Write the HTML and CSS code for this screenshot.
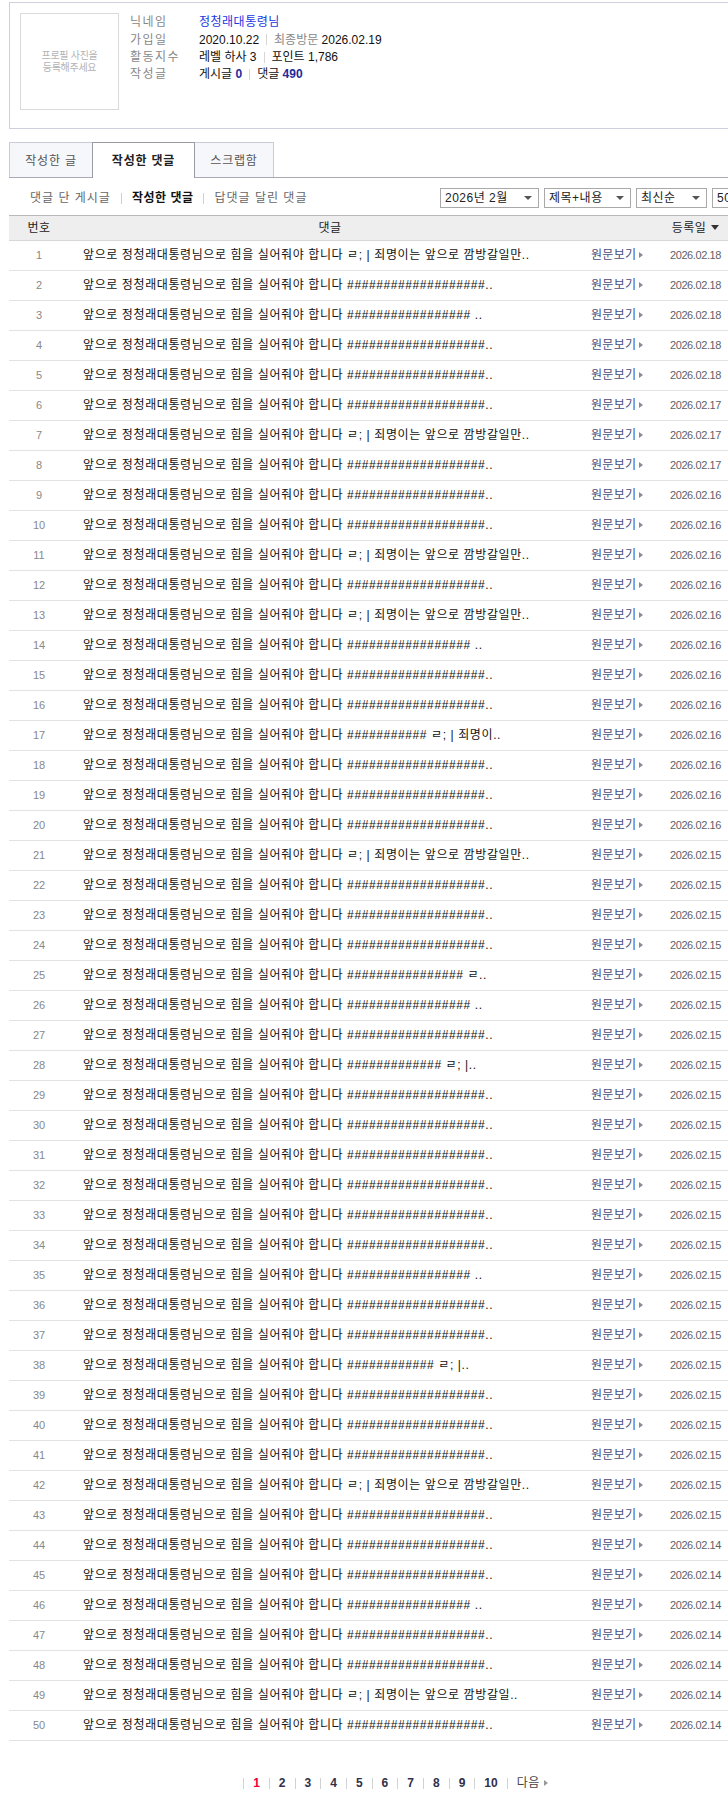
FILE: index.html
```html
<!DOCTYPE html>
<html lang="ko">
<head>
<meta charset="utf-8">
<title>작성한 댓글</title>
<link rel="stylesheet" href="styles.css">
</head>
<body>
<div class="page">
  <div class="profile">
    <div class="photo"><span>프로필 사진을</span><span>등록해주세요</span></div>
    <div class="info">
      <div class="info-row"><span class="label">닉네임</span><span class="nick">정청래대통령님</span></div>
      <div class="info-row"><span class="label">가입일</span><span>2020.10.22</span><span class="bar"></span><span class="muted">최종방문</span>&nbsp;2026.02.19</div>
      <div class="info-row"><span class="label">활동지수</span><span>레벨 하사 3</span><span class="bar"></span><span>포인트 1,786</span></div>
      <div class="info-row"><span class="label">작성글</span><span>게시글 <b class="count">0</b></span><span class="bar"></span><span>댓글 <b class="count">490</b></span></div>
    </div>
  </div>

  <div class="tabs">
    <div class="tab tab-first">작성한 글</div>
    <div class="tab tab-active">작성한 댓글</div>
    <div class="tab tab-last">스크랩함</div>
  </div>

  <div class="filter">
    <span class="sub">댓글 단 게시글</span><span class="bar"></span><span class="sub sub-on">작성한 댓글</span><span class="bar"></span><span class="sub">답댓글 달린 댓글</span>
    <div class="selects">
      <div class="select s-month">2026년 2월<i class="caret"></i></div>
      <div class="select s-type">제목+내용<i class="caret"></i></div>
      <div class="select s-sort">최신순<i class="caret"></i></div>
      <div class="select s-count">50개씩<i class="caret"></i></div>
    </div>
  </div>

  <div class="list">
    <div class="thead"><span class="c-no">번호</span><span class="c-head">댓글</span><span></span><span class="c-date">등록일<i class="down"></i></span></div>
    <div class="row"><span class="c-no">1</span><span class="c-text">앞으로 정청래대통령님으로 힘을 실어줘야 합니다 ㄹ; | 죄명이는 앞으로 깜방갈일만..</span><span class="c-link">원문보기</span><span class="c-date">2026.02.18</span></div>
    <div class="row"><span class="c-no">2</span><span class="c-text">앞으로 정청래대통령님으로 힘을 실어줘야 합니다 ###################..</span><span class="c-link">원문보기</span><span class="c-date">2026.02.18</span></div>
    <div class="row"><span class="c-no">3</span><span class="c-text">앞으로 정청래대통령님으로 힘을 실어줘야 합니다 ################# ..</span><span class="c-link">원문보기</span><span class="c-date">2026.02.18</span></div>
    <div class="row"><span class="c-no">4</span><span class="c-text">앞으로 정청래대통령님으로 힘을 실어줘야 합니다 ###################..</span><span class="c-link">원문보기</span><span class="c-date">2026.02.18</span></div>
    <div class="row"><span class="c-no">5</span><span class="c-text">앞으로 정청래대통령님으로 힘을 실어줘야 합니다 ###################..</span><span class="c-link">원문보기</span><span class="c-date">2026.02.18</span></div>
    <div class="row"><span class="c-no">6</span><span class="c-text">앞으로 정청래대통령님으로 힘을 실어줘야 합니다 ###################..</span><span class="c-link">원문보기</span><span class="c-date">2026.02.17</span></div>
    <div class="row"><span class="c-no">7</span><span class="c-text">앞으로 정청래대통령님으로 힘을 실어줘야 합니다 ㄹ; | 죄명이는 앞으로 깜방갈일만..</span><span class="c-link">원문보기</span><span class="c-date">2026.02.17</span></div>
    <div class="row"><span class="c-no">8</span><span class="c-text">앞으로 정청래대통령님으로 힘을 실어줘야 합니다 ###################..</span><span class="c-link">원문보기</span><span class="c-date">2026.02.17</span></div>
    <div class="row"><span class="c-no">9</span><span class="c-text">앞으로 정청래대통령님으로 힘을 실어줘야 합니다 ###################..</span><span class="c-link">원문보기</span><span class="c-date">2026.02.16</span></div>
    <div class="row"><span class="c-no">10</span><span class="c-text">앞으로 정청래대통령님으로 힘을 실어줘야 합니다 ###################..</span><span class="c-link">원문보기</span><span class="c-date">2026.02.16</span></div>
    <div class="row"><span class="c-no">11</span><span class="c-text">앞으로 정청래대통령님으로 힘을 실어줘야 합니다 ㄹ; | 죄명이는 앞으로 깜방갈일만..</span><span class="c-link">원문보기</span><span class="c-date">2026.02.16</span></div>
    <div class="row"><span class="c-no">12</span><span class="c-text">앞으로 정청래대통령님으로 힘을 실어줘야 합니다 ###################..</span><span class="c-link">원문보기</span><span class="c-date">2026.02.16</span></div>
    <div class="row"><span class="c-no">13</span><span class="c-text">앞으로 정청래대통령님으로 힘을 실어줘야 합니다 ㄹ; | 죄명이는 앞으로 깜방갈일만..</span><span class="c-link">원문보기</span><span class="c-date">2026.02.16</span></div>
    <div class="row"><span class="c-no">14</span><span class="c-text">앞으로 정청래대통령님으로 힘을 실어줘야 합니다 ################# ..</span><span class="c-link">원문보기</span><span class="c-date">2026.02.16</span></div>
    <div class="row"><span class="c-no">15</span><span class="c-text">앞으로 정청래대통령님으로 힘을 실어줘야 합니다 ###################..</span><span class="c-link">원문보기</span><span class="c-date">2026.02.16</span></div>
    <div class="row"><span class="c-no">16</span><span class="c-text">앞으로 정청래대통령님으로 힘을 실어줘야 합니다 ###################..</span><span class="c-link">원문보기</span><span class="c-date">2026.02.16</span></div>
    <div class="row"><span class="c-no">17</span><span class="c-text">앞으로 정청래대통령님으로 힘을 실어줘야 합니다 ########### ㄹ; | 죄명이..</span><span class="c-link">원문보기</span><span class="c-date">2026.02.16</span></div>
    <div class="row"><span class="c-no">18</span><span class="c-text">앞으로 정청래대통령님으로 힘을 실어줘야 합니다 ###################..</span><span class="c-link">원문보기</span><span class="c-date">2026.02.16</span></div>
    <div class="row"><span class="c-no">19</span><span class="c-text">앞으로 정청래대통령님으로 힘을 실어줘야 합니다 ###################..</span><span class="c-link">원문보기</span><span class="c-date">2026.02.16</span></div>
    <div class="row"><span class="c-no">20</span><span class="c-text">앞으로 정청래대통령님으로 힘을 실어줘야 합니다 ###################..</span><span class="c-link">원문보기</span><span class="c-date">2026.02.16</span></div>
    <div class="row"><span class="c-no">21</span><span class="c-text">앞으로 정청래대통령님으로 힘을 실어줘야 합니다 ㄹ; | 죄명이는 앞으로 깜방갈일만..</span><span class="c-link">원문보기</span><span class="c-date">2026.02.15</span></div>
    <div class="row"><span class="c-no">22</span><span class="c-text">앞으로 정청래대통령님으로 힘을 실어줘야 합니다 ###################..</span><span class="c-link">원문보기</span><span class="c-date">2026.02.15</span></div>
    <div class="row"><span class="c-no">23</span><span class="c-text">앞으로 정청래대통령님으로 힘을 실어줘야 합니다 ###################..</span><span class="c-link">원문보기</span><span class="c-date">2026.02.15</span></div>
    <div class="row"><span class="c-no">24</span><span class="c-text">앞으로 정청래대통령님으로 힘을 실어줘야 합니다 ###################..</span><span class="c-link">원문보기</span><span class="c-date">2026.02.15</span></div>
    <div class="row"><span class="c-no">25</span><span class="c-text">앞으로 정청래대통령님으로 힘을 실어줘야 합니다 ################ ㄹ..</span><span class="c-link">원문보기</span><span class="c-date">2026.02.15</span></div>
    <div class="row"><span class="c-no">26</span><span class="c-text">앞으로 정청래대통령님으로 힘을 실어줘야 합니다 ################# ..</span><span class="c-link">원문보기</span><span class="c-date">2026.02.15</span></div>
    <div class="row"><span class="c-no">27</span><span class="c-text">앞으로 정청래대통령님으로 힘을 실어줘야 합니다 ###################..</span><span class="c-link">원문보기</span><span class="c-date">2026.02.15</span></div>
    <div class="row"><span class="c-no">28</span><span class="c-text">앞으로 정청래대통령님으로 힘을 실어줘야 합니다 ############# ㄹ; |..</span><span class="c-link">원문보기</span><span class="c-date">2026.02.15</span></div>
    <div class="row"><span class="c-no">29</span><span class="c-text">앞으로 정청래대통령님으로 힘을 실어줘야 합니다 ###################..</span><span class="c-link">원문보기</span><span class="c-date">2026.02.15</span></div>
    <div class="row"><span class="c-no">30</span><span class="c-text">앞으로 정청래대통령님으로 힘을 실어줘야 합니다 ###################..</span><span class="c-link">원문보기</span><span class="c-date">2026.02.15</span></div>
    <div class="row"><span class="c-no">31</span><span class="c-text">앞으로 정청래대통령님으로 힘을 실어줘야 합니다 ###################..</span><span class="c-link">원문보기</span><span class="c-date">2026.02.15</span></div>
    <div class="row"><span class="c-no">32</span><span class="c-text">앞으로 정청래대통령님으로 힘을 실어줘야 합니다 ###################..</span><span class="c-link">원문보기</span><span class="c-date">2026.02.15</span></div>
    <div class="row"><span class="c-no">33</span><span class="c-text">앞으로 정청래대통령님으로 힘을 실어줘야 합니다 ###################..</span><span class="c-link">원문보기</span><span class="c-date">2026.02.15</span></div>
    <div class="row"><span class="c-no">34</span><span class="c-text">앞으로 정청래대통령님으로 힘을 실어줘야 합니다 ###################..</span><span class="c-link">원문보기</span><span class="c-date">2026.02.15</span></div>
    <div class="row"><span class="c-no">35</span><span class="c-text">앞으로 정청래대통령님으로 힘을 실어줘야 합니다 ################# ..</span><span class="c-link">원문보기</span><span class="c-date">2026.02.15</span></div>
    <div class="row"><span class="c-no">36</span><span class="c-text">앞으로 정청래대통령님으로 힘을 실어줘야 합니다 ###################..</span><span class="c-link">원문보기</span><span class="c-date">2026.02.15</span></div>
    <div class="row"><span class="c-no">37</span><span class="c-text">앞으로 정청래대통령님으로 힘을 실어줘야 합니다 ###################..</span><span class="c-link">원문보기</span><span class="c-date">2026.02.15</span></div>
    <div class="row"><span class="c-no">38</span><span class="c-text">앞으로 정청래대통령님으로 힘을 실어줘야 합니다 ############ ㄹ; |..</span><span class="c-link">원문보기</span><span class="c-date">2026.02.15</span></div>
    <div class="row"><span class="c-no">39</span><span class="c-text">앞으로 정청래대통령님으로 힘을 실어줘야 합니다 ###################..</span><span class="c-link">원문보기</span><span class="c-date">2026.02.15</span></div>
    <div class="row"><span class="c-no">40</span><span class="c-text">앞으로 정청래대통령님으로 힘을 실어줘야 합니다 ###################..</span><span class="c-link">원문보기</span><span class="c-date">2026.02.15</span></div>
    <div class="row"><span class="c-no">41</span><span class="c-text">앞으로 정청래대통령님으로 힘을 실어줘야 합니다 ###################..</span><span class="c-link">원문보기</span><span class="c-date">2026.02.15</span></div>
    <div class="row"><span class="c-no">42</span><span class="c-text">앞으로 정청래대통령님으로 힘을 실어줘야 합니다 ㄹ; | 죄명이는 앞으로 깜방갈일만..</span><span class="c-link">원문보기</span><span class="c-date">2026.02.15</span></div>
    <div class="row"><span class="c-no">43</span><span class="c-text">앞으로 정청래대통령님으로 힘을 실어줘야 합니다 ###################..</span><span class="c-link">원문보기</span><span class="c-date">2026.02.15</span></div>
    <div class="row"><span class="c-no">44</span><span class="c-text">앞으로 정청래대통령님으로 힘을 실어줘야 합니다 ###################..</span><span class="c-link">원문보기</span><span class="c-date">2026.02.14</span></div>
    <div class="row"><span class="c-no">45</span><span class="c-text">앞으로 정청래대통령님으로 힘을 실어줘야 합니다 ###################..</span><span class="c-link">원문보기</span><span class="c-date">2026.02.14</span></div>
    <div class="row"><span class="c-no">46</span><span class="c-text">앞으로 정청래대통령님으로 힘을 실어줘야 합니다 ################# ..</span><span class="c-link">원문보기</span><span class="c-date">2026.02.14</span></div>
    <div class="row"><span class="c-no">47</span><span class="c-text">앞으로 정청래대통령님으로 힘을 실어줘야 합니다 ###################..</span><span class="c-link">원문보기</span><span class="c-date">2026.02.14</span></div>
    <div class="row"><span class="c-no">48</span><span class="c-text">앞으로 정청래대통령님으로 힘을 실어줘야 합니다 ###################..</span><span class="c-link">원문보기</span><span class="c-date">2026.02.14</span></div>
    <div class="row"><span class="c-no">49</span><span class="c-text">앞으로 정청래대통령님으로 힘을 실어줘야 합니다 ㄹ; | 죄명이는 앞으로 깜방갈일..</span><span class="c-link">원문보기</span><span class="c-date">2026.02.14</span></div>
    <div class="row"><span class="c-no">50</span><span class="c-text">앞으로 정청래대통령님으로 힘을 실어줘야 합니다 ###################..</span><span class="c-link">원문보기</span><span class="c-date">2026.02.14</span></div>
  </div>

  <div class="paging">
    <span class="pg-sep"></span><a class="pg pg-on">1</a>
    <span class="pg-sep"></span><a class="pg">2</a>
    <span class="pg-sep"></span><a class="pg">3</a>
    <span class="pg-sep"></span><a class="pg">4</a>
    <span class="pg-sep"></span><a class="pg">5</a>
    <span class="pg-sep"></span><a class="pg">6</a>
    <span class="pg-sep"></span><a class="pg">7</a>
    <span class="pg-sep"></span><a class="pg">8</a>
    <span class="pg-sep"></span><a class="pg">9</a>
    <span class="pg-sep"></span><a class="pg">10</a>
    <span class="pg-sep"></span><a class="pg-next">다음</a>
  </div>
</div>
</body>
</html>
```

FILE: styles.css
```css
html, body {
  margin: 0;
  padding: 0;
  overflow: hidden;
  background: #fff;
}
body {
  font-family: "Liberation Sans", "Noto Sans CJK KR", sans-serif;
  font-size: 12px;
  line-height: 1.2;
  color: #222;
}
.page {
  width: 773px;
  padding: 2px 0 0 9px;
}

/* profile */
.profile {
  display: flex;
  box-sizing: border-box;
  height: 127px;
  padding: 10px 10px 0;
  border: 1px solid #cfd0dd;
}
.photo {
  box-sizing: border-box;
  width: 99px;
  height: 97px;
  border: 1px solid #dadada;
  display: flex;
  flex-direction: column;
  align-items: center;
  justify-content: center;
  font-size: 10px;
  line-height: 12px;
  color: #b3b3b3;
  letter-spacing: -0.3px;
}
.info {
  margin-left: 11px;
  padding-top: 1px;
}
.info-row {
  display: flex;
  align-items: center;
  height: 17.3px;
  color: #111;
  white-space: nowrap;
}
.label {
  width: 69px;
  color: #888;
  letter-spacing: 1.5px;
}
.nick {
  color: #1b36e0;
  letter-spacing: 0.5px;
}
.muted {
  color: #888;
}
.count {
  color: #1e2a9c;
}
.bar {
  display: inline-block;
  width: 1px;
  height: 11px;
  background: #d6d6d6;
  margin: 0 7px;
}

/* tabs */
.tabs {
  display: flex;
  align-items: flex-start;
  margin-top: 13px;
  border-bottom: 1px solid #a9a9b2;
}
.tab {
  box-sizing: border-box;
  height: 35px;
  padding-top: 3px;
  border: 1px solid #c9cbd8;
  border-bottom: 0;
  background: #f6f7fa;
  color: #555;
  display: flex;
  align-items: center;
  justify-content: center;
  font-size: 12px;
  letter-spacing: 0.8px;
}
.tab-first {
  width: 84px;
}
.tab-active {
  position: relative;
  z-index: 1;
  width: 103px;
  height: 36px;
  margin: 0 0 -1px -1px;
  padding-bottom: 1px;
  border-color: #9a9aa6;
  background: #fff;
  color: #222;
  font-weight: bold;
}
.tab-last {
  width: 80px;
  margin-left: -1px;
}

/* filter */
.filter {
  display: flex;
  align-items: center;
  height: 20px;
  margin-top: 10px;
  padding-left: 21px;
  white-space: nowrap;
}
.filter .bar {
  margin: 0 10px;
  background: #d0d0d0;
}
.sub {
  color: #666;
  letter-spacing: 1px;
}
.sub-on {
  color: #111;
  font-weight: bold;
  letter-spacing: 0.5px;
}
.selects {
  display: flex;
  gap: 5px;
  margin-left: auto;
}
.select {
  box-sizing: border-box;
  height: 20px;
  padding: 0 0 0 4px;
  border: 1px solid #a9a9a9;
  background: #fff;
  color: #222;
  display: flex;
  align-items: center;
  justify-content: space-between;
  letter-spacing: 0.5px;
}
.s-month { width: 99px; }
.s-type { width: 87px; }
.s-sort { width: 71px; }
.s-count { width: 70px; }
.caret {
  width: 0;
  height: 0;
  margin-right: 6px;
  border-left: 4px solid transparent;
  border-right: 4px solid transparent;
  border-top: 4px solid #555;
}

/* list */
.list {
  width: 727px;
  margin-top: 7px;
}
.thead,
.row {
  display: grid;
  grid-template-columns: 60px 522px 64px 81px;
  align-items: center;
  box-sizing: border-box;
  white-space: nowrap;
}
.thead {
  height: 26px;
  border-top: 1px solid #b9b9b9;
  border-bottom: 1px solid #d8d8d8;
  background: #eeeeee;
  color: #222;
}
.row {
  height: 30px;
  border-bottom: 1px solid #e3e3e3;
}
.c-no {
  text-align: center;
  font-size: 11px;
  color: #888;
}
.thead .c-no {
  font-size: 12px;
  color: #222;
  letter-spacing: 0.5px;
}
.c-head {
  text-align: center;
  letter-spacing: 0.5px;
}
.c-text {
  padding-left: 14px;
  color: #111;
  overflow: hidden;
  letter-spacing: 0.6px;
}
.c-link {
  color: #474e7c;
  display: flex;
  align-items: center;
  letter-spacing: 0.3px;
}
.c-link::after {
  content: "";
  width: 0;
  height: 0;
  margin-left: 3px;
  border-top: 3px solid transparent;
  border-bottom: 3px solid transparent;
  border-left: 4px solid #8a8a96;
}
.c-date {
  text-align: center;
  font-size: 11px;
  letter-spacing: -0.4px;
  color: #5f5f6a;
}
.thead .c-date {
  font-size: 12px;
  letter-spacing: 0.5px;
  color: #222;
  display: flex;
  align-items: center;
  justify-content: center;
}
.down {
  width: 0;
  height: 0;
  margin-left: 5px;
  border-left: 4px solid transparent;
  border-right: 4px solid transparent;
  border-top: 5px solid #333;
}

/* paging */
.paging {
  display: flex;
  align-items: center;
  justify-content: center;
  height: 20px;
  margin-top: 32px;
}
.pg-sep {
  width: 1px;
  height: 11px;
  background: #d2d2d2;
}
.pg {
  padding: 0 9px;
  font-weight: bold;
  color: #30304a;
}
.pg-on {
  color: #ee0033;
}
.pg-next {
  display: flex;
  align-items: center;
  padding-left: 9px;
  color: #444;
  letter-spacing: 0.5px;
}
.pg-next::after {
  content: "";
  width: 0;
  height: 0;
  margin-left: 4px;
  border-top: 3px solid transparent;
  border-bottom: 3px solid transparent;
  border-left: 4px solid #999;
}
```
